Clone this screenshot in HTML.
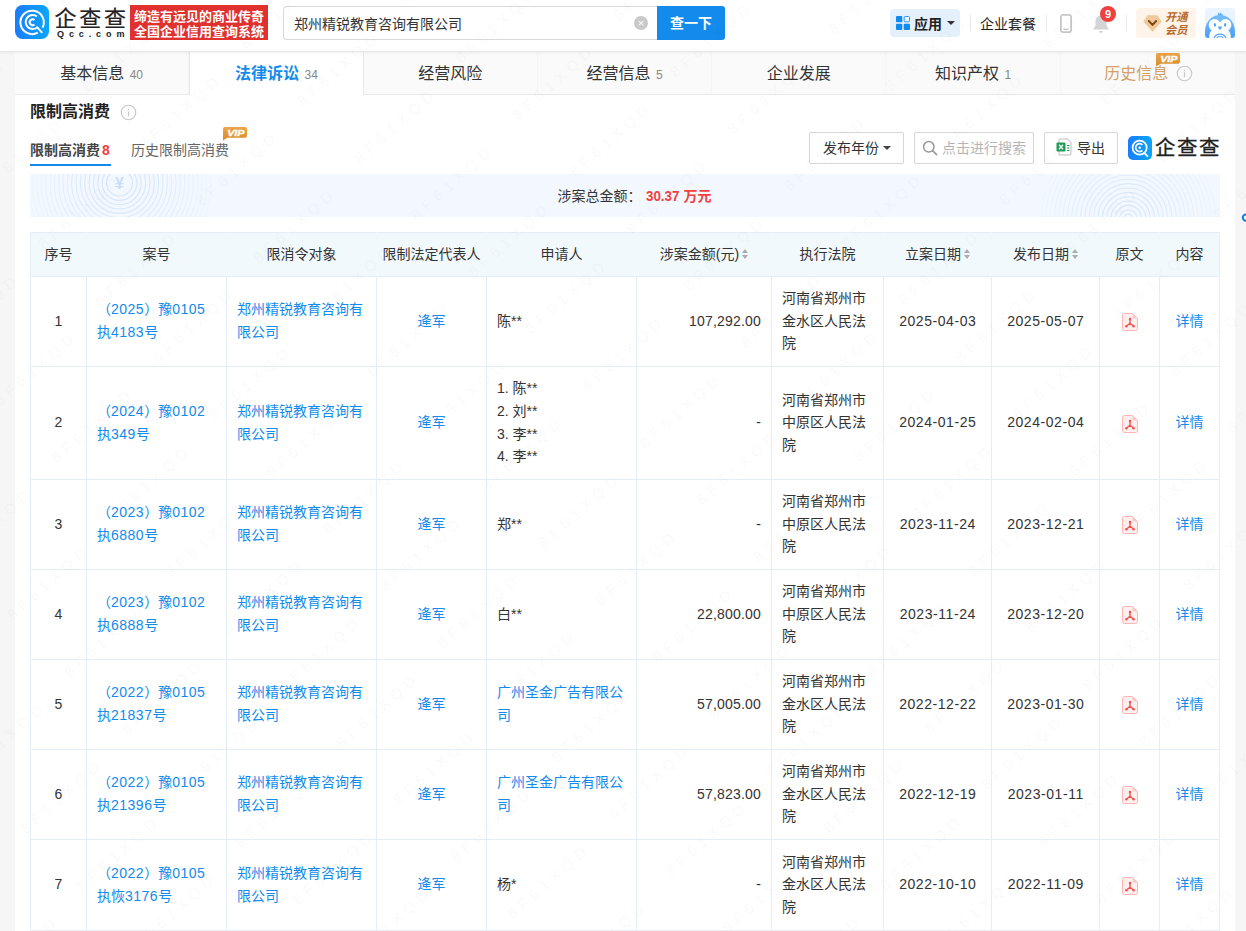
<!DOCTYPE html>
<html lang="zh-CN">
<head>
<meta charset="utf-8">
<title>企查查</title>
<style>
*{box-sizing:border-box;margin:0;padding:0}
html,body{width:1246px;height:931px;overflow:hidden}
body{background:#f6f6f6;font-family:"Liberation Sans","Noto Sans CJK SC",sans-serif;color:#333;font-size:14px;position:relative}
a{color:#128bed;text-decoration:none}
.abs{position:absolute}
/* header */
#hd{position:absolute;left:0;top:0;width:1246px;height:52px;background:#fff;border-bottom:1px solid #e9e9e9;box-shadow:0 1px 3px rgba(0,0,0,.06);z-index:5}
#logoicon{left:15px;top:5px;width:34px;height:34px}
#logotxt{left:54.500px;top:5.500px;font-size:22px;line-height:26px;letter-spacing:2.700px;color:#222;font-weight:400;-webkit-text-stroke:0.200px #222;white-space:nowrap}
#logosub{left:57px;top:30px;font-size:9px;line-height:9px;letter-spacing:4.900px;color:#222;font-weight:bold;white-space:nowrap}
#slogan{left:130px;top:5px;width:138px;height:35px;background:#e0312f;color:#fff;font-weight:bold;font-size:13px;line-height:15.5px;padding:3.5px 0 0 4px;white-space:nowrap;letter-spacing:0px}
#sinput{left:283px;top:6px;width:375px;height:34px;border:1px solid #d9d9d9;border-right:none;border-radius:4px 0 0 4px;background:#fff;font-size:14px;line-height:34px;padding-left:10px;color:#333}
#sclear{left:634px;top:16px;width:14px;height:14px;border-radius:50%;background:#c9c9c9;color:#fff;font-size:11px;line-height:14px;text-align:center}
#sbtn{left:657px;top:6px;width:68px;height:34px;background:#128bed;color:#fff;font-weight:bold;font-size:14px;line-height:34px;text-align:center;border-radius:0 3px 3px 0}
#app{left:890px;top:9px;width:70px;height:28px;background:#e5f0fd;border-radius:4px}
.vsep{position:absolute;top:15px;width:1px;height:16px;background:#e8e8e8}
#pkg{left:980px;top:14.500px;font-size:14px;line-height:18px;color:#222}
#vipbox{left:1136px;top:8px;width:60px;height:30px;background:#fef4ea;border-radius:3px}
#avatar{left:1205px;top:8px;width:30px;height:30px}
/* nav */
#nav{position:absolute;left:15px;top:52px;width:1220px;height:43px;background:#fafafa;border-bottom:1px solid #e9e9e9}
.tab{position:absolute;top:0;height:42px;line-height:43px;border-right:1px solid #f5f5f5;text-align:center;font-size:16px;color:#333;white-space:nowrap}
.tab small{font-size:12px;color:#888;margin-left:1px}
.tab.on{background:#fff;height:43px;border-left:1px solid #e9e9e9;border-right:1px solid #e9e9e9;color:#128bed;font-weight:bold}
.tab.on small{font-weight:normal}
#main{position:absolute;left:15px;top:95px;width:1220px;height:837px;background:#fff}
/* section */
#title{left:30px;top:100px;font-size:16px;font-weight:bold;line-height:24px;color:#222}
.btn{position:absolute;top:132px;height:32px;border:1px solid #d6d6d6;border-radius:2px;background:#fff;font-size:14px;line-height:30px;color:#333;white-space:nowrap}
#banner{left:30px;top:174px;width:1190px;height:43px;background:#f2f8fe;overflow:hidden}
#bantxt{left:0;top:0;width:1190px;height:43px;line-height:44px;font-size:14px;color:#333;white-space:nowrap}
/* table */
table{position:absolute;left:30px;top:232px;width:1189px;border-collapse:collapse;table-layout:fixed;font-size:14px}
th,td{border:1px solid #e4eef6;padding:0 10px 1px;line-height:22.6px;vertical-align:middle;color:#333;font-weight:normal}
th{height:44px;background:#f2f9fc;text-align:center;padding:0;border-left-color:#f2f9fc;border-right-color:#f2f9fc}
th:first-child{border-left-color:#e4eef6}
th:last-child{border-right-color:#e4eef6}
td.c{text-align:center;padding:0 0 1px}
td.r{text-align:right}
tr.r1 td{height:90px}
tr.r2 td{height:113px}
tr.r3 td{height:91px}
.d{letter-spacing:.56px;margin-right:-.56px}
.m{letter-spacing:.2px}
.n{font-style:normal;letter-spacing:.5px}
.sort{display:inline-block;width:6px;height:10px;position:relative;margin-left:3px;top:0px}
.sort:before,.sort:after{content:"";position:absolute;left:0;border-left:3px solid transparent;border-right:3px solid transparent}
.sort:before{top:0;border-bottom:4px solid #aaa}
.sort:after{bottom:0;border-top:4px solid #aaa}
.pdf{display:inline-block;width:16px;height:18px;vertical-align:middle}
</style>
</head>
<body>
<div id="hd">
  <svg id="logoicon" class="abs" viewBox="0 0 34 34"><defs><linearGradient id="lg" x1="0" y1="0" x2="1" y2="0"><stop offset="0" stop-color="#1b7dfc"/><stop offset="1" stop-color="#0aa6fb"/></linearGradient></defs><rect width="34" height="34" rx="7.500" fill="url(#lg)"/><path d="M27.600 22.600A11.700 11.700 0 1 0 22.800 27.600" fill="none" stroke="#fff" stroke-width="2"/><path d="M21.900 11.500A7 7 0 1 0 22.300 22.300L27.200 27.800" fill="none" stroke="#fff" stroke-width="2" stroke-linejoin="round"/><path d="M19.500 15.100A2.900 2.900 0 1 0 19.500 19.500" fill="none" stroke="#fff" stroke-width="2"/></svg>
  <div id="logotxt" class="abs">企查查</div>
  <div id="logosub" class="abs">Qcc.com</div>
  <div id="slogan" class="abs">缔造有远见的商业传奇<br>全国企业信用查询系统</div>
  <div id="sinput" class="abs">郑州精锐教育咨询有限公司</div>
  <div id="sclear" class="abs">×</div>
  <div id="sbtn" class="abs">查一下</div>
  <div id="app" class="abs">
    <svg class="abs" style="left:6px;top:7px" width="14" height="14" viewBox="0 0 14 14"><rect x="0" y="0" width="6.3" height="6.3" rx="1" fill="#128bed"/><rect x="8.200" y=".500" width="5.300" height="5.300" rx="1" fill="#eaf4ff" stroke="#2b95f0" stroke-width="1"/><rect x="0" y="7.7" width="6.3" height="6.3" rx="1" fill="#128bed"/><rect x="7.7" y="7.7" width="6.3" height="6.3" rx="1" fill="#128bed"/></svg>
    <div class="abs" style="left:24px;top:5.500px;font-size:14px;line-height:18px;font-weight:bold;color:#222;white-space:nowrap">应用</div>
    <div class="abs" style="left:57px;top:12px;border-left:4px solid transparent;border-right:4px solid transparent;border-top:4px solid #333"></div>
  </div>
  <div class="vsep" style="left:970px"></div>
  <div id="pkg" class="abs">企业套餐</div>
  <div class="vsep" style="left:1046px"></div>
  <svg class="abs" style="left:1060px;top:13.500px" width="12" height="19" viewBox="0 0 12 19"><rect x="0.900" y="0.900" width="10.200" height="17.200" rx="2.200" fill="#fff" stroke="#c6c6c6" stroke-width="1.800"/><rect x="3.500" y="14.600" width="5" height="1.500" fill="#c6c6c6"/></svg>
  <svg class="abs" style="left:1092px;top:14px" width="18" height="20" viewBox="0 0 18 20"><path d="M9 1.5c-3.3 0-5.5 2.5-5.5 5.8v4.2L1.5 14.5v1h15v-1l-2-3V7.3c0-3.3-2.200-5.800-5.500-5.800z" fill="#d4d4d4"/><path d="M7 17h4a2 2 0 0 1-4 0z" fill="#d4d4d4"/></svg>
  <div class="abs" style="left:1100px;top:6px;width:16px;height:16px;border-radius:50%;background:#f04040;color:#fff;font-size:11px;font-weight:bold;line-height:16px;text-align:center">9</div>
  <div class="vsep" style="left:1126px"></div>
  <div id="vipbox" class="abs">
    <svg class="abs" style="left:7px;top:7px" width="19" height="17" viewBox="0 0 19 17"><path d="M4.500 0.300h10L18.700 6.500 9.500 16.700 0.300 6.500z" fill="#f2c99b"/><path d="M5.800 6l3.700 3.900L13.200 6" fill="none" stroke="#7a4a10" stroke-width="2" stroke-linecap="round" stroke-linejoin="round"/></svg>
    <div class="abs" style="left:29px;top:3px;font-size:11.200px;line-height:12.500px;font-weight:bold;font-style:italic;color:#b8682a;white-space:nowrap">开通<br>会员</div>
  </div>
  <svg id="avatar" class="abs" viewBox="0 0 30 30"><defs><linearGradient id="ag" x1="0" y1="0" x2="0" y2="1"><stop offset="0" stop-color="#78befb"/><stop offset="1" stop-color="#4a9ff6"/></linearGradient><clipPath id="ac"><rect width="30" height="30" rx="3"/></clipPath></defs><g clip-path="url(#ac)"><rect width="30" height="30" fill="#eaf4ff"/><path d="M13.300 8c-.9-1.400-.5-2.600.5-3.400.1.900.5 1.300 1 1.600.1-.9.600-1.500 1.400-1.700-.2 1 .3 1.800.8 2.300.3-.5.700-.8 1.200-.8-.4.800-.3 1.400-.6 2z" fill="#5aaef9"/><path d="M0 30V22.500C1 12.500 7.500 7 15 7s14 5.500 15 15.500V30z" fill="url(#ag)"/><path d="M4.200 30c-.3-3.500.8-6.500 3.300-8.500h15c2.500 2 3.600 5 3.300 8.500z" fill="#fff"/><circle cx="9.600" cy="17" r="5.900" fill="#fff"/><circle cx="20.400" cy="17" r="5.900" fill="#fff"/><ellipse cx="9.900" cy="16.800" rx="1.150" ry="1.900" fill="#4ea6f8"/><ellipse cx="20.100" cy="16.800" rx="1.150" ry="1.900" fill="#4ea6f8"/><path d="M13 18.600h4c0 1.600-.9 2.400-2 2.400s-2-.8-2-2.400z" fill="#4ea6f8"/><path d="M9 30.500a6 4.300 0 0 1 12 0" fill="none" stroke="#4ea6f8" stroke-width="1.300"/><path d="M11.800 30.800a3.200 2.300 0 0 1 6.400 0" fill="none" stroke="#4ea6f8" stroke-width="1.200"/></g></svg>
</div>
<div id="nav">
  <div class="tab" style="left:0;width:174.29px">基本信息 <small>40</small></div>
  <div class="tab on" style="left:174.29px;width:174.29px">法律诉讼 <small>34</small></div>
  <div class="tab" style="left:348.57px;width:174.29px">经营风险</div>
  <div class="tab" style="left:522.86px;width:174.29px">经营信息 <small>5</small></div>
  <div class="tab" style="left:697.14px;width:174.29px">企业发展</div>
  <div class="tab" style="left:871.43px;width:174.29px">知识产权 <small>1</small></div>
  <div class="tab" style="left:1045.71px;width:174.29px;color:#d3a06a;text-align:left;padding-left:43.500px;border-right:none">历史信息</div>
</div>
<div id="main"></div>
<div id="title" class="abs">限制高消费</div>

<svg class="abs" style="left:119.500px;top:103.500px" width="17" height="17" viewBox="0 0 16 16"><circle cx="8" cy="8" r="6.800" fill="none" stroke="#c8c8c8" stroke-width="1.100"/><rect x="7.400" y="7" width="1.200" height="4.500" fill="#c8c8c8"/><rect x="7.400" y="4.600" width="1.200" height="1.300" fill="#c8c8c8"/></svg>
<div class="abs" style="left:30px;top:139px;font-size:14px;line-height:22px;font-weight:bold;color:#444;white-space:nowrap">限制高消费<span style="color:#f04040;font-size:15.500px;margin-left:1.500px;display:inline-block;transform:scaleX(.9);transform-origin:0 50%">8</span></div>
<div class="abs" style="left:30px;top:164px;width:81px;height:2px;background:#128bed"></div>
<div class="abs" style="left:131px;top:139px;font-size:14px;line-height:22px;color:#666;white-space:nowrap">历史限制高消费</div>
<svg class="abs vip" style="left:223px;top:127px" width="25" height="14" viewBox="0 0 25 14"><defs><linearGradient id="vg" x1="0" y1="0" x2="0" y2="1"><stop offset="0" stop-color="#eda64a"/><stop offset="1" stop-color="#d88a2a"/></linearGradient></defs><path d="M2 0h20a2 2 0 0 1 2 2v6.800a2 2 0 0 1-2 2H4.500L0 13.500V2a2 2 0 0 1 2-2z" fill="url(#vg)"/><text x="10.700" y="8.800" font-family="Liberation Sans,sans-serif" font-size="9" font-weight="bold" font-style="italic" fill="#fff" stroke="#fff" stroke-width=".35" text-anchor="middle" transform="scale(1.2,1)">VIP</text></svg>
<div class="btn" style="left:809px;width:95px;padding-left:13px">发布年份<i class="abs" style="left:73px;top:13px;border-left:4px solid transparent;border-right:4px solid transparent;border-top:4px solid #444"></i></div>
<div class="btn" style="left:914px;width:120px;padding-left:27px;color:#b5b5b5"><svg class="abs" style="left:7px;top:7px" width="16" height="16" viewBox="0 0 16 16"><circle cx="6.800" cy="6.800" r="5.200" fill="none" stroke="#999" stroke-width="1.500"/><path d="M10.600 10.600l4 4" stroke="#999" stroke-width="1.600" stroke-linecap="round"/></svg>点击进行搜索</div>
<div class="btn" style="left:1044px;width:74px;padding-left:32px"><svg class="abs" style="left:11px;top:5px" width="16" height="18" viewBox="0 0 16 18"><path d="M4 1h7.500L15 4.500V16a1 1 0 0 1-1 1H4a1 1 0 0 1-1-1V2a1 1 0 0 1 1-1z" fill="#fff" stroke="#bdbdbd" stroke-width="1"/><rect x="0.500" y="4.500" width="9" height="9" rx="1" fill="#1f9d55"/><path d="M3 6.800l4 4.400M7 6.800l-4 4.400" stroke="#fff" stroke-width="1.300"/><rect x="11" y="7" width="2.500" height="1" fill="#1f9d55"/><rect x="11" y="9.500" width="2.500" height="1" fill="#1f9d55"/><rect x="11" y="12" width="2.500" height="1" fill="#1f9d55"/></svg>导出</div>
<svg class="abs" style="left:1128px;top:136px" width="24" height="24" viewBox="0 0 34 34"><rect width="34" height="34" rx="7" fill="url(#lg)"/><circle cx="16.500" cy="16.500" r="10" fill="none" stroke="#fff" stroke-width="2.400"/><path d="M20.500 12.600a5.600 5.600 0 1 0 0 7.800" fill="none" stroke="#fff" stroke-width="2.400"/><circle cx="16.600" cy="16.500" r="1.800" fill="#fff"/><path d="M23 24l4.500 4.500" stroke="#fff" stroke-width="2.600" stroke-linecap="round"/></svg>
<div class="abs" style="left:1155px;top:134px;font-size:20.500px;line-height:28px;color:#222;font-weight:400;-webkit-text-stroke:0.300px #222;white-space:nowrap;letter-spacing:1.500px">企查查</div>
<svg class="abs vip" style="left:1156px;top:53px" width="25" height="14" viewBox="0 0 25 14"><path d="M2 0h20a2 2 0 0 1 2 2v6.800a2 2 0 0 1-2 2H4.500L0 13.500V2a2 2 0 0 1 2-2z" fill="url(#vg)"/><text x="10.700" y="8.800" font-family="Liberation Sans,sans-serif" font-size="9" font-weight="bold" font-style="italic" fill="#fff" stroke="#fff" stroke-width=".35" text-anchor="middle" transform="scale(1.2,1)">VIP</text></svg>
<svg class="abs" style="left:1176px;top:65px" width="17" height="17" viewBox="0 0 16 16"><circle cx="8" cy="8" r="6.800" fill="none" stroke="#c8c8c8" stroke-width="1.100"/><rect x="7.400" y="7" width="1.200" height="4.500" fill="#c8c8c8"/><rect x="7.400" y="4.600" width="1.200" height="1.300" fill="#c8c8c8"/></svg>
<svg class="abs" style="left:1238px;top:210px" width="8" height="16" viewBox="0 0 8 16"><circle cx="8" cy="7.600" r="3.200" fill="#fff" stroke="#0d7de8" stroke-width="2"/></svg>
<div id="banner" class="abs"><svg class="abs" style="left:0;top:0" width="1190" height="43" viewBox="0 0 1190 43"><circle cx="89.5" cy="9" r="13.00" fill="none" stroke="#d3e4fb" stroke-width="1.100" opacity="1.00"/><circle cx="89.5" cy="9" r="17.35" fill="none" stroke="#d3e4fb" stroke-width="1.100" opacity="0.95"/><circle cx="89.5" cy="9" r="21.70" fill="none" stroke="#d3e4fb" stroke-width="1.100" opacity="0.90"/><circle cx="89.5" cy="9" r="26.05" fill="none" stroke="#d3e4fb" stroke-width="1.100" opacity="0.85"/><circle cx="89.5" cy="9" r="30.40" fill="none" stroke="#d3e4fb" stroke-width="1.100" opacity="0.81"/><circle cx="89.5" cy="9" r="34.75" fill="none" stroke="#d3e4fb" stroke-width="1.100" opacity="0.76"/><circle cx="89.5" cy="9" r="39.10" fill="none" stroke="#d3e4fb" stroke-width="1.100" opacity="0.71"/><circle cx="89.5" cy="9" r="43.45" fill="none" stroke="#d3e4fb" stroke-width="1.100" opacity="0.66"/><circle cx="89.5" cy="9" r="47.80" fill="none" stroke="#d3e4fb" stroke-width="1.100" opacity="0.61"/><circle cx="89.5" cy="9" r="52.15" fill="none" stroke="#d3e4fb" stroke-width="1.100" opacity="0.56"/><circle cx="89.5" cy="9" r="56.50" fill="none" stroke="#d3e4fb" stroke-width="1.100" opacity="0.52"/><circle cx="89.5" cy="9" r="60.85" fill="none" stroke="#d3e4fb" stroke-width="1.100" opacity="0.47"/><circle cx="89.5" cy="9" r="65.20" fill="none" stroke="#d3e4fb" stroke-width="1.100" opacity="0.42"/><circle cx="89.5" cy="9" r="69.55" fill="none" stroke="#d3e4fb" stroke-width="1.100" opacity="0.37"/><circle cx="89.5" cy="9" r="73.90" fill="none" stroke="#d3e4fb" stroke-width="1.100" opacity="0.32"/><circle cx="89.5" cy="9" r="78.25" fill="none" stroke="#d3e4fb" stroke-width="1.100" opacity="0.27"/><circle cx="89.5" cy="9" r="82.60" fill="none" stroke="#d3e4fb" stroke-width="1.100" opacity="0.23"/><circle cx="89.5" cy="9" r="86.95" fill="none" stroke="#d3e4fb" stroke-width="1.100" opacity="0.18"/><circle cx="89.5" cy="9" r="91.30" fill="none" stroke="#d3e4fb" stroke-width="1.100" opacity="0.13"/><circle cx="1098.4" cy="44.5" r="4.40" fill="none" stroke="#d3e4fb" stroke-width="1.100" opacity="1.00"/><circle cx="1098.4" cy="44.5" r="8.75" fill="none" stroke="#d3e4fb" stroke-width="1.100" opacity="0.95"/><circle cx="1098.4" cy="44.5" r="13.10" fill="none" stroke="#d3e4fb" stroke-width="1.100" opacity="0.91"/><circle cx="1098.4" cy="44.5" r="17.45" fill="none" stroke="#d3e4fb" stroke-width="1.100" opacity="0.86"/><circle cx="1098.4" cy="44.5" r="21.80" fill="none" stroke="#d3e4fb" stroke-width="1.100" opacity="0.82"/><circle cx="1098.4" cy="44.5" r="26.15" fill="none" stroke="#d3e4fb" stroke-width="1.100" opacity="0.77"/><circle cx="1098.4" cy="44.5" r="30.50" fill="none" stroke="#d3e4fb" stroke-width="1.100" opacity="0.72"/><circle cx="1098.4" cy="44.5" r="34.85" fill="none" stroke="#d3e4fb" stroke-width="1.100" opacity="0.68"/><circle cx="1098.4" cy="44.5" r="39.20" fill="none" stroke="#d3e4fb" stroke-width="1.100" opacity="0.63"/><circle cx="1098.4" cy="44.5" r="43.55" fill="none" stroke="#d3e4fb" stroke-width="1.100" opacity="0.59"/><circle cx="1098.4" cy="44.5" r="47.90" fill="none" stroke="#d3e4fb" stroke-width="1.100" opacity="0.54"/><circle cx="1098.4" cy="44.5" r="52.25" fill="none" stroke="#d3e4fb" stroke-width="1.100" opacity="0.49"/><circle cx="1098.4" cy="44.5" r="56.60" fill="none" stroke="#d3e4fb" stroke-width="1.100" opacity="0.45"/><circle cx="1098.4" cy="44.5" r="60.95" fill="none" stroke="#d3e4fb" stroke-width="1.100" opacity="0.40"/><circle cx="1098.4" cy="44.5" r="65.30" fill="none" stroke="#d3e4fb" stroke-width="1.100" opacity="0.36"/><circle cx="1098.4" cy="44.5" r="69.65" fill="none" stroke="#d3e4fb" stroke-width="1.100" opacity="0.31"/><circle cx="1098.4" cy="44.5" r="74.00" fill="none" stroke="#d3e4fb" stroke-width="1.100" opacity="0.26"/><circle cx="1098.4" cy="44.5" r="78.35" fill="none" stroke="#d3e4fb" stroke-width="1.100" opacity="0.22"/><circle cx="1098.4" cy="44.5" r="82.70" fill="none" stroke="#d3e4fb" stroke-width="1.100" opacity="0.17"/><circle cx="1098.4" cy="44.5" r="87.05" fill="none" stroke="#d3e4fb" stroke-width="1.100" opacity="0.13"/><text x="89.500" y="14.800" font-size="16" font-weight="bold" fill="#c9ddf8" text-anchor="middle" font-family="Liberation Sans,sans-serif">¥</text></svg><div id="bantxt" class="abs"><span class="abs" style="left:527.500px">涉案总金额：</span><span class="abs" style="left:615.500px;color:#f04040;font-weight:bold"><span style="display:inline-block;font-size:15px;transform:scaleX(.89);transform-origin:0 50%;width:38px">30.37</span>万元</span></div></div>
<table>
<colgroup><col style="width:56px"><col style="width:140px"><col style="width:150px"><col style="width:110px"><col style="width:150px"><col style="width:135px"><col style="width:112px"><col style="width:108px"><col style="width:108px"><col style="width:60px"><col style="width:60px"></colgroup>
<tr><th>序号</th><th>案号</th><th>限消令对象</th><th>限制法定代表人</th><th>申请人</th><th>涉案金额(元)<i class="sort"></i></th><th>执行法院</th><th>立案日期<i class="sort"></i></th><th>发布日期<i class="sort"></i></th><th>原文</th><th>内容</th></tr>
<tr class="r1"><td class="c">1</td><td><a>（<i class="n">2025</i>）豫<i class="n">0105</i><br>执<i class="n">4183</i>号</a></td><td><a>郑州精锐教育咨询有限公司</a></td><td class="c"><a>逄军</a></td><td>陈**</td><td class="r"><span class="m">107,292.00</span></td><td>河南省郑州市金水区人民法院</td><td class="c"><span class="d">2025-04-03</span></td><td class="c"><span class="d">2025-05-07</span></td><td class="c"><svg class="pdf" viewBox="0 0 16 18"><path d="M2.500 .500h8L15.500 5.500v10a2 2 0 0 1-2 2h-11a2 2 0 0 1-2-2v-13a2 2 0 0 1 2-2z" fill="#ffefef" stroke="#ffb5b5"/><path d="M10.500 .500v3a2 2 0 0 0 2 2h3z" fill="#ffc6c6"/><path d="M8 6.200v4M8 10.200L4.600 13M8 10.200l3.400 2.800" fill="none" stroke="#f4514f" stroke-width="1.400" stroke-linecap="round"/><circle cx="8" cy="5.900" r="1.250" fill="#f4514f"/><circle cx="4.400" cy="13.200" r="1.250" fill="#f4514f"/><circle cx="11.600" cy="13.200" r="1.250" fill="#f4514f"/></svg></td><td class="c"><a>详情</a></td></tr>
<tr class="r2"><td class="c">2</td><td><a>（<i class="n">2024</i>）豫<i class="n">0102</i><br>执<i class="n">349</i>号</a></td><td><a>郑州精锐教育咨询有限公司</a></td><td class="c"><a>逄军</a></td><td>1. 陈**<br>2. 刘**<br>3. 李**<br>4. 李**</td><td class="r">-</td><td>河南省郑州市中原区人民法院</td><td class="c"><span class="d">2024-01-25</span></td><td class="c"><span class="d">2024-02-04</span></td><td class="c"><svg class="pdf" viewBox="0 0 16 18"><path d="M2.500 .500h8L15.500 5.500v10a2 2 0 0 1-2 2h-11a2 2 0 0 1-2-2v-13a2 2 0 0 1 2-2z" fill="#ffefef" stroke="#ffb5b5"/><path d="M10.500 .500v3a2 2 0 0 0 2 2h3z" fill="#ffc6c6"/><path d="M8 6.200v4M8 10.200L4.600 13M8 10.200l3.400 2.800" fill="none" stroke="#f4514f" stroke-width="1.400" stroke-linecap="round"/><circle cx="8" cy="5.900" r="1.250" fill="#f4514f"/><circle cx="4.400" cy="13.200" r="1.250" fill="#f4514f"/><circle cx="11.600" cy="13.200" r="1.250" fill="#f4514f"/></svg></td><td class="c"><a>详情</a></td></tr>
<tr class="r1"><td class="c">3</td><td><a>（<i class="n">2023</i>）豫<i class="n">0102</i><br>执<i class="n">6880</i>号</a></td><td><a>郑州精锐教育咨询有限公司</a></td><td class="c"><a>逄军</a></td><td>郑**</td><td class="r">-</td><td>河南省郑州市中原区人民法院</td><td class="c"><span class="d">2023-11-24</span></td><td class="c"><span class="d">2023-12-21</span></td><td class="c"><svg class="pdf" viewBox="0 0 16 18"><path d="M2.500 .500h8L15.500 5.500v10a2 2 0 0 1-2 2h-11a2 2 0 0 1-2-2v-13a2 2 0 0 1 2-2z" fill="#ffefef" stroke="#ffb5b5"/><path d="M10.500 .500v3a2 2 0 0 0 2 2h3z" fill="#ffc6c6"/><path d="M8 6.200v4M8 10.200L4.600 13M8 10.200l3.400 2.800" fill="none" stroke="#f4514f" stroke-width="1.400" stroke-linecap="round"/><circle cx="8" cy="5.900" r="1.250" fill="#f4514f"/><circle cx="4.400" cy="13.200" r="1.250" fill="#f4514f"/><circle cx="11.600" cy="13.200" r="1.250" fill="#f4514f"/></svg></td><td class="c"><a>详情</a></td></tr>
<tr class="r1"><td class="c">4</td><td><a>（<i class="n">2023</i>）豫<i class="n">0102</i><br>执<i class="n">6888</i>号</a></td><td><a>郑州精锐教育咨询有限公司</a></td><td class="c"><a>逄军</a></td><td>白**</td><td class="r"><span class="m">22,800.00</span></td><td>河南省郑州市中原区人民法院</td><td class="c"><span class="d">2023-11-24</span></td><td class="c"><span class="d">2023-12-20</span></td><td class="c"><svg class="pdf" viewBox="0 0 16 18"><path d="M2.500 .500h8L15.500 5.500v10a2 2 0 0 1-2 2h-11a2 2 0 0 1-2-2v-13a2 2 0 0 1 2-2z" fill="#ffefef" stroke="#ffb5b5"/><path d="M10.500 .500v3a2 2 0 0 0 2 2h3z" fill="#ffc6c6"/><path d="M8 6.200v4M8 10.200L4.600 13M8 10.200l3.400 2.800" fill="none" stroke="#f4514f" stroke-width="1.400" stroke-linecap="round"/><circle cx="8" cy="5.900" r="1.250" fill="#f4514f"/><circle cx="4.400" cy="13.200" r="1.250" fill="#f4514f"/><circle cx="11.600" cy="13.200" r="1.250" fill="#f4514f"/></svg></td><td class="c"><a>详情</a></td></tr>
<tr class="r1"><td class="c">5</td><td><a>（<i class="n">2022</i>）豫<i class="n">0105</i><br>执<i class="n">21837</i>号</a></td><td><a>郑州精锐教育咨询有限公司</a></td><td class="c"><a>逄军</a></td><td><a>广州圣金广告有限公司</a></td><td class="r"><span class="m">57,005.00</span></td><td>河南省郑州市金水区人民法院</td><td class="c"><span class="d">2022-12-22</span></td><td class="c"><span class="d">2023-01-30</span></td><td class="c"><svg class="pdf" viewBox="0 0 16 18"><path d="M2.500 .500h8L15.500 5.500v10a2 2 0 0 1-2 2h-11a2 2 0 0 1-2-2v-13a2 2 0 0 1 2-2z" fill="#ffefef" stroke="#ffb5b5"/><path d="M10.500 .500v3a2 2 0 0 0 2 2h3z" fill="#ffc6c6"/><path d="M8 6.200v4M8 10.200L4.600 13M8 10.200l3.400 2.800" fill="none" stroke="#f4514f" stroke-width="1.400" stroke-linecap="round"/><circle cx="8" cy="5.900" r="1.250" fill="#f4514f"/><circle cx="4.400" cy="13.200" r="1.250" fill="#f4514f"/><circle cx="11.600" cy="13.200" r="1.250" fill="#f4514f"/></svg></td><td class="c"><a>详情</a></td></tr>
<tr class="r1"><td class="c">6</td><td><a>（<i class="n">2022</i>）豫<i class="n">0105</i><br>执<i class="n">21396</i>号</a></td><td><a>郑州精锐教育咨询有限公司</a></td><td class="c"><a>逄军</a></td><td><a>广州圣金广告有限公司</a></td><td class="r"><span class="m">57,823.00</span></td><td>河南省郑州市金水区人民法院</td><td class="c"><span class="d">2022-12-19</span></td><td class="c"><span class="d">2023-01-11</span></td><td class="c"><svg class="pdf" viewBox="0 0 16 18"><path d="M2.500 .500h8L15.500 5.500v10a2 2 0 0 1-2 2h-11a2 2 0 0 1-2-2v-13a2 2 0 0 1 2-2z" fill="#ffefef" stroke="#ffb5b5"/><path d="M10.500 .500v3a2 2 0 0 0 2 2h3z" fill="#ffc6c6"/><path d="M8 6.200v4M8 10.200L4.600 13M8 10.200l3.400 2.800" fill="none" stroke="#f4514f" stroke-width="1.400" stroke-linecap="round"/><circle cx="8" cy="5.900" r="1.250" fill="#f4514f"/><circle cx="4.400" cy="13.200" r="1.250" fill="#f4514f"/><circle cx="11.600" cy="13.200" r="1.250" fill="#f4514f"/></svg></td><td class="c"><a>详情</a></td></tr>
<tr class="r3"><td class="c">7</td><td><a>（<i class="n">2022</i>）豫<i class="n">0105</i><br>执恢<i class="n">3176</i>号</a></td><td><a>郑州精锐教育咨询有限公司</a></td><td class="c"><a>逄军</a></td><td>杨*</td><td class="r">-</td><td>河南省郑州市金水区人民法院</td><td class="c"><span class="d">2022-10-10</span></td><td class="c"><span class="d">2022-11-09</span></td><td class="c"><svg class="pdf" viewBox="0 0 16 18"><path d="M2.500 .500h8L15.500 5.500v10a2 2 0 0 1-2 2h-11a2 2 0 0 1-2-2v-13a2 2 0 0 1 2-2z" fill="#ffefef" stroke="#ffb5b5"/><path d="M10.500 .500v3a2 2 0 0 0 2 2h3z" fill="#ffc6c6"/><path d="M8 6.200v4M8 10.200L4.600 13M8 10.200l3.400 2.800" fill="none" stroke="#f4514f" stroke-width="1.400" stroke-linecap="round"/><circle cx="8" cy="5.900" r="1.250" fill="#f4514f"/><circle cx="4.400" cy="13.200" r="1.250" fill="#f4514f"/><circle cx="11.600" cy="13.200" r="1.250" fill="#f4514f"/></svg></td><td class="c"><a>详情</a></td></tr>
</table>
<svg class="abs" style="left:0;top:0;z-index:9;pointer-events:none" width="1246" height="931" viewBox="0 0 1246 931"><g font-family="Liberation Sans,sans-serif" font-size="15" letter-spacing="5.500" fill="#000" opacity=".02"><text transform="translate(31 36) rotate(-41.600)">8F61XQD</text><text transform="translate(-70 136) rotate(-41.600)">8F61XQD</text><text transform="translate(88 93) rotate(-41.600)">8F61XQD</text><text transform="translate(246 50) rotate(-41.600)">8F61XQD</text><text transform="translate(404 7) rotate(-41.600)">8F61XQD</text><text transform="translate(-13 193) rotate(-41.600)">8F61XQD</text><text transform="translate(145 150) rotate(-41.600)">8F61XQD</text><text transform="translate(303 107) rotate(-41.600)">8F61XQD</text><text transform="translate(461 64) rotate(-41.600)">8F61XQD</text><text transform="translate(619 21) rotate(-41.600)">8F61XQD</text><text transform="translate(44 250) rotate(-41.600)">8F61XQD</text><text transform="translate(202 207) rotate(-41.600)">8F61XQD</text><text transform="translate(360 164) rotate(-41.600)">8F61XQD</text><text transform="translate(518 121) rotate(-41.600)">8F61XQD</text><text transform="translate(676 78) rotate(-41.600)">8F61XQD</text><text transform="translate(834 35) rotate(-41.600)">8F61XQD</text><text transform="translate(-57 350) rotate(-41.600)">8F61XQD</text><text transform="translate(101 307) rotate(-41.600)">8F61XQD</text><text transform="translate(259 264) rotate(-41.600)">8F61XQD</text><text transform="translate(417 221) rotate(-41.600)">8F61XQD</text><text transform="translate(575 178) rotate(-41.600)">8F61XQD</text><text transform="translate(733 135) rotate(-41.600)">8F61XQD</text><text transform="translate(891 92) rotate(-41.600)">8F61XQD</text><text transform="translate(1049 49) rotate(-41.600)">8F61XQD</text><text transform="translate(1207 6) rotate(-41.600)">8F61XQD</text><text transform="translate(0 407) rotate(-41.600)">8F61XQD</text><text transform="translate(158 364) rotate(-41.600)">8F61XQD</text><text transform="translate(316 321) rotate(-41.600)">8F61XQD</text><text transform="translate(474 278) rotate(-41.600)">8F61XQD</text><text transform="translate(632 235) rotate(-41.600)">8F61XQD</text><text transform="translate(790 192) rotate(-41.600)">8F61XQD</text><text transform="translate(948 149) rotate(-41.600)">8F61XQD</text><text transform="translate(1106 106) rotate(-41.600)">8F61XQD</text><text transform="translate(57 464) rotate(-41.600)">8F61XQD</text><text transform="translate(215 421) rotate(-41.600)">8F61XQD</text><text transform="translate(373 378) rotate(-41.600)">8F61XQD</text><text transform="translate(531 335) rotate(-41.600)">8F61XQD</text><text transform="translate(689 292) rotate(-41.600)">8F61XQD</text><text transform="translate(847 249) rotate(-41.600)">8F61XQD</text><text transform="translate(1005 206) rotate(-41.600)">8F61XQD</text><text transform="translate(1163 163) rotate(-41.600)">8F61XQD</text><text transform="translate(-44 564) rotate(-41.600)">8F61XQD</text><text transform="translate(114 521) rotate(-41.600)">8F61XQD</text><text transform="translate(272 478) rotate(-41.600)">8F61XQD</text><text transform="translate(430 435) rotate(-41.600)">8F61XQD</text><text transform="translate(588 392) rotate(-41.600)">8F61XQD</text><text transform="translate(746 349) rotate(-41.600)">8F61XQD</text><text transform="translate(904 306) rotate(-41.600)">8F61XQD</text><text transform="translate(1062 263) rotate(-41.600)">8F61XQD</text><text transform="translate(1220 220) rotate(-41.600)">8F61XQD</text><text transform="translate(13 621) rotate(-41.600)">8F61XQD</text><text transform="translate(171 578) rotate(-41.600)">8F61XQD</text><text transform="translate(329 535) rotate(-41.600)">8F61XQD</text><text transform="translate(487 492) rotate(-41.600)">8F61XQD</text><text transform="translate(645 449) rotate(-41.600)">8F61XQD</text><text transform="translate(803 406) rotate(-41.600)">8F61XQD</text><text transform="translate(961 363) rotate(-41.600)">8F61XQD</text><text transform="translate(1119 320) rotate(-41.600)">8F61XQD</text><text transform="translate(-88 721) rotate(-41.600)">8F61XQD</text><text transform="translate(70 678) rotate(-41.600)">8F61XQD</text><text transform="translate(228 635) rotate(-41.600)">8F61XQD</text><text transform="translate(386 592) rotate(-41.600)">8F61XQD</text><text transform="translate(544 549) rotate(-41.600)">8F61XQD</text><text transform="translate(702 506) rotate(-41.600)">8F61XQD</text><text transform="translate(860 463) rotate(-41.600)">8F61XQD</text><text transform="translate(1018 420) rotate(-41.600)">8F61XQD</text><text transform="translate(1176 377) rotate(-41.600)">8F61XQD</text><text transform="translate(-31 778) rotate(-41.600)">8F61XQD</text><text transform="translate(127 735) rotate(-41.600)">8F61XQD</text><text transform="translate(285 692) rotate(-41.600)">8F61XQD</text><text transform="translate(443 649) rotate(-41.600)">8F61XQD</text><text transform="translate(601 606) rotate(-41.600)">8F61XQD</text><text transform="translate(759 563) rotate(-41.600)">8F61XQD</text><text transform="translate(917 520) rotate(-41.600)">8F61XQD</text><text transform="translate(1075 477) rotate(-41.600)">8F61XQD</text><text transform="translate(1233 434) rotate(-41.600)">8F61XQD</text><text transform="translate(26 835) rotate(-41.600)">8F61XQD</text><text transform="translate(184 792) rotate(-41.600)">8F61XQD</text><text transform="translate(342 749) rotate(-41.600)">8F61XQD</text><text transform="translate(500 706) rotate(-41.600)">8F61XQD</text><text transform="translate(658 663) rotate(-41.600)">8F61XQD</text><text transform="translate(816 620) rotate(-41.600)">8F61XQD</text><text transform="translate(974 577) rotate(-41.600)">8F61XQD</text><text transform="translate(1132 534) rotate(-41.600)">8F61XQD</text><text transform="translate(-75 935) rotate(-41.600)">8F61XQD</text><text transform="translate(83 892) rotate(-41.600)">8F61XQD</text><text transform="translate(241 849) rotate(-41.600)">8F61XQD</text><text transform="translate(399 806) rotate(-41.600)">8F61XQD</text><text transform="translate(557 763) rotate(-41.600)">8F61XQD</text><text transform="translate(715 720) rotate(-41.600)">8F61XQD</text><text transform="translate(873 677) rotate(-41.600)">8F61XQD</text><text transform="translate(1031 634) rotate(-41.600)">8F61XQD</text><text transform="translate(1189 591) rotate(-41.600)">8F61XQD</text><text transform="translate(-18 992) rotate(-41.600)">8F61XQD</text><text transform="translate(140 949) rotate(-41.600)">8F61XQD</text><text transform="translate(298 906) rotate(-41.600)">8F61XQD</text><text transform="translate(456 863) rotate(-41.600)">8F61XQD</text><text transform="translate(614 820) rotate(-41.600)">8F61XQD</text><text transform="translate(772 777) rotate(-41.600)">8F61XQD</text><text transform="translate(930 734) rotate(-41.600)">8F61XQD</text><text transform="translate(1088 691) rotate(-41.600)">8F61XQD</text><text transform="translate(197 1006) rotate(-41.600)">8F61XQD</text><text transform="translate(355 963) rotate(-41.600)">8F61XQD</text><text transform="translate(513 920) rotate(-41.600)">8F61XQD</text><text transform="translate(671 877) rotate(-41.600)">8F61XQD</text><text transform="translate(829 834) rotate(-41.600)">8F61XQD</text><text transform="translate(987 791) rotate(-41.600)">8F61XQD</text><text transform="translate(1145 748) rotate(-41.600)">8F61XQD</text><text transform="translate(570 977) rotate(-41.600)">8F61XQD</text><text transform="translate(728 934) rotate(-41.600)">8F61XQD</text><text transform="translate(886 891) rotate(-41.600)">8F61XQD</text><text transform="translate(1044 848) rotate(-41.600)">8F61XQD</text><text transform="translate(1202 805) rotate(-41.600)">8F61XQD</text><text transform="translate(785 991) rotate(-41.600)">8F61XQD</text><text transform="translate(943 948) rotate(-41.600)">8F61XQD</text><text transform="translate(1101 905) rotate(-41.600)">8F61XQD</text><text transform="translate(1000 1005) rotate(-41.600)">8F61XQD</text><text transform="translate(1158 962) rotate(-41.600)">8F61XQD</text></g></svg>
</body>
</html>
